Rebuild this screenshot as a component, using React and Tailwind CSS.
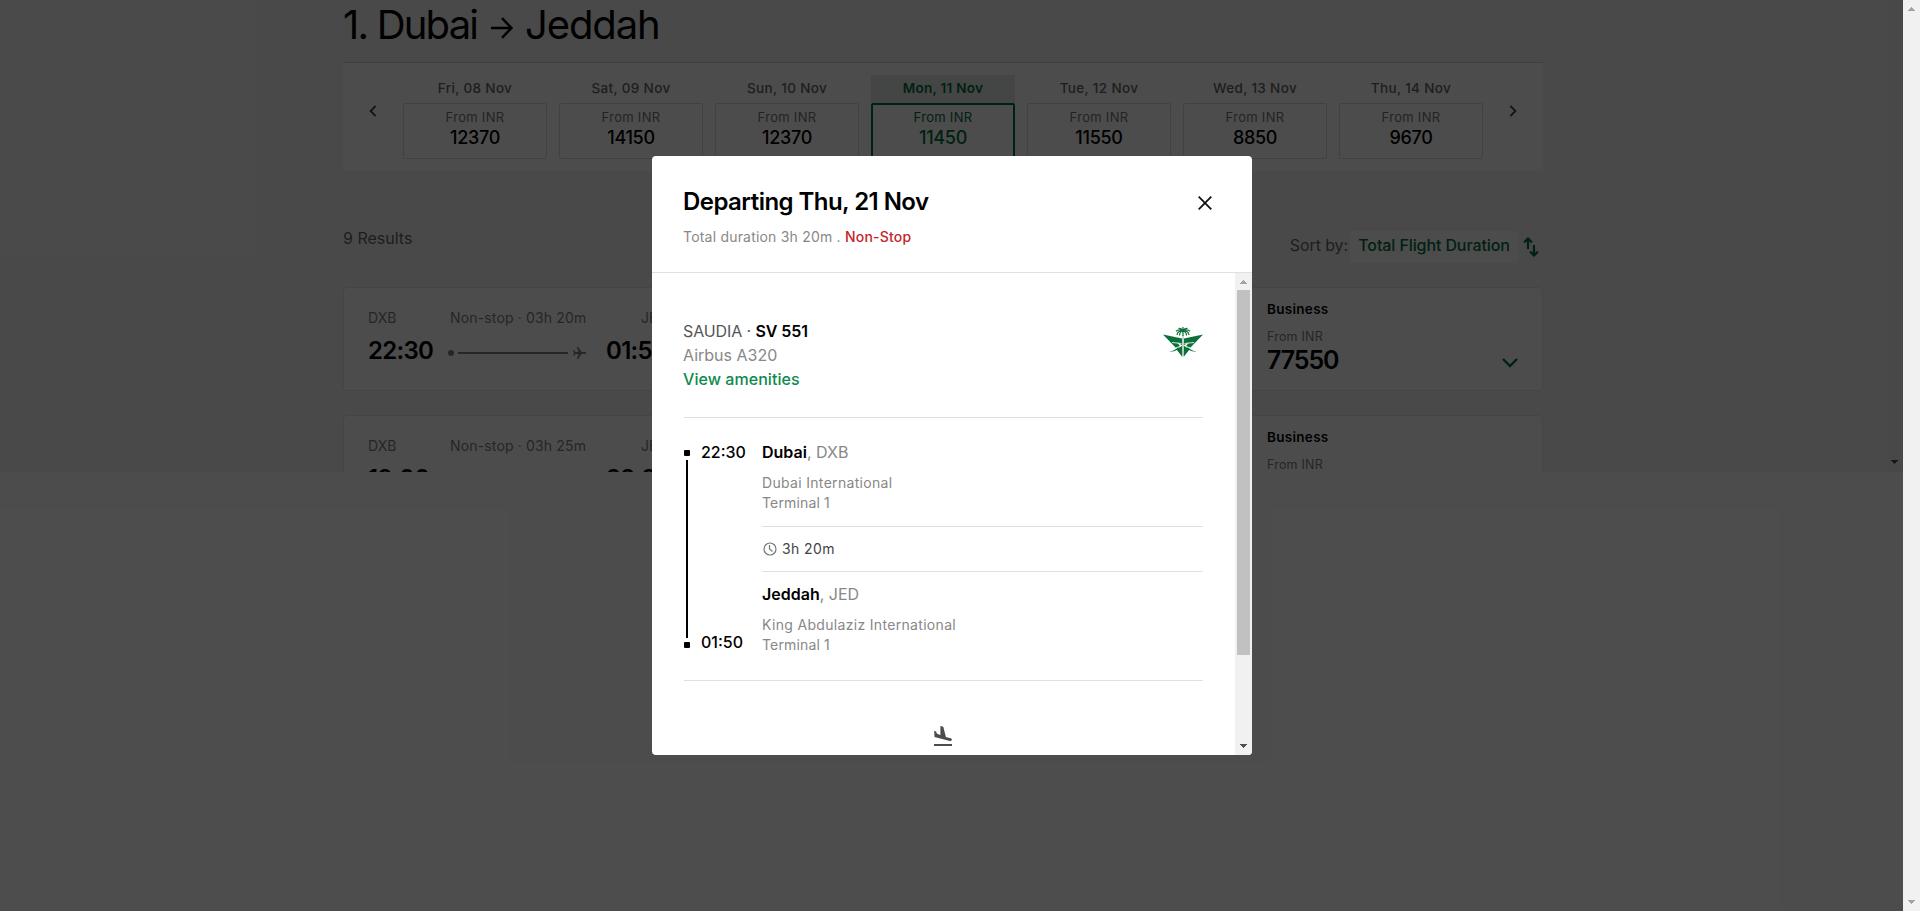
import React from "react";

const dates = [
  { day: "Fri, 08 Nov", price: "12370" },
  { day: "Sat, 09 Nov", price: "14150" },
  { day: "Sun, 10 Nov", price: "12370" },
  { day: "Mon, 11 Nov", price: "11450", active: true },
  { day: "Tue, 12 Nov", price: "11550" },
  { day: "Wed, 13 Nov", price: "8850" },
  { day: "Thu, 14 Nov", price: "9670" },
];

const flights = [
  { depart: "22:30", arrive: "01:50", duration: "Non-stop · 03h 20m", price: "77550" },
  { depart: "19:00", arrive: "22:25", duration: "Non-stop · 03h 25m", price: "77550" },
];

function ArrowUp({ className }) {
  return (
    <svg viewBox="0 0 7 4" className={className} shapeRendering="crispEdges">
      <path d="M3 0h1v1h1v1h1v1h1v1H0V3h1V2h1V1h1z" fill="currentColor" />
    </svg>
  );
}

function DateStrip() {
  return (
    <div className="flex h-[109px] border-t border-[#d0d0d0] bg-white pt-3">
      <div className="flex w-[60px] justify-center pt-[30px]">
        <svg viewBox="0 0 8 12" className="mr-[1px] h-3 w-2" fill="none" stroke="#444" strokeWidth="1.8">
          <path d="M6.6 1 1.6 6l5 5" />
        </svg>
      </div>
      <div className="flex gap-3">
        {dates.map((d) => (
          <div key={d.day} className="w-[144px] text-center">
            <div
              className={
                d.active
                  ? "h-7 bg-[#e0ece8] text-[13.5px] leading-[27px] font-semibold tracking-[0.3px] text-[#00703a]"
                  : "h-7 text-[13.5px] leading-[27px] font-medium tracking-[0.35px] text-[#666]"
              }
            >
              {d.day}
            </div>
            <div
              className={
                d.active
                  ? "h-14 rounded-[2px] border-2 border-[#00703a] pt-[3px] text-[#00703a]"
                  : "h-14 rounded-[2px] border border-[#dadada] pt-1 text-black"
              }
            >
              <div className={d.active ? "text-[13px] leading-[18px] tracking-[0.3px]" : "text-[13px] leading-[18px] tracking-[0.3px] text-[#777]"}>
                From INR
              </div>
              <div className="mt-[1px] text-[18px] leading-[22px] font-medium tracking-[-0.3px]">{d.price}</div>
            </div>
          </div>
        ))}
      </div>
      <div className="flex w-[60px] justify-center pt-[30px]">
        <svg viewBox="0 0 8 12" className="mr-[1px] h-3 w-2" fill="none" stroke="#444" strokeWidth="1.8">
          <path d="m1.4 1 5 5-5 5" />
        </svg>
      </div>
    </div>
  );
}

function FlightCard({ flight }) {
  return (
    <div className="mb-6 flex h-[104px] shrink-0 rounded-[4px] border border-[#e4e4e4] bg-white">
      <div className="flex flex-1 pt-5 pl-6">
        <div className="w-20">
          <div className="text-[14px] leading-5 text-[#808080]">DXB</div>
          <div className="mt-[11px] text-[24px] leading-6 font-semibold tracking-[-0.7px] text-black">{flight.depart}</div>
        </div>
        <div className="w-[157px]">
          <div className="pl-[2px] text-[14px] leading-5 tracking-[0.15px] whitespace-nowrap text-[#808080]">{flight.duration}</div>
          <div className="mt-[19px] flex items-center">
            <div className="h-[6px] w-[6px] rounded-full bg-[#808080]" />
            <div className="ml-1 h-[2px] w-[110px] bg-[#808080]" />
            <svg viewBox="0 0 13 12" className="ml-[5px] h-3 w-[13px]" fill="#808080">
              <path d="M12.2 5 8.5 5 5.2 0H3.8l1.6 5H2.6L1.2 3.2H.1L1 6 .1 8.8h1.1L2.6 7h2.8l-1.6 5h1.4l3.3-5h3.7c1.1 0 1.1-2 0-2Z" />
            </svg>
          </div>
        </div>
        <div>
          <div className="pl-9 text-[14px] leading-5 text-[#808080]">JED</div>
          <div className="mt-[11px] pl-[1px] text-[24px] leading-6 font-semibold tracking-[-0.7px] text-black">{flight.arrive}</div>
        </div>
      </div>
      <div className="flex w-[275px] justify-between pt-[11px]">
        <div>
          <div className="text-[13.5px] leading-5 font-semibold tracking-[0.3px] text-black">Business</div>
          <div className="mt-[9px] text-[12.5px] leading-[18px] tracking-[0.2px] text-[#808080]">From INR</div>
          <div className="mt-[1px] text-[25px] leading-[26px] font-semibold tracking-[-1.1px] text-black">{flight.price}</div>
        </div>
        <svg viewBox="0 0 16 10" className="mt-[59px] mr-6 h-[10px] w-4" fill="none" stroke="#00703a" strokeWidth="2.4">
          <path d="m1 1 7 7 7-7" />
        </svg>
      </div>
    </div>
  );
}

function ResultsPage() {
  return (
    <div className="flex h-[472px] w-[1903px] overflow-hidden bg-[#f6f6f6]">
      <div className="w-[1886px] pl-[343px]">
        <div className="w-[1200px]">
          <div className="flex h-[62px] text-[40px] leading-[50px] text-black">
            <span className="w-[148px] tracking-[-1.8px] whitespace-nowrap">1. Dubai</span>
            <svg viewBox="0 0 22 22" className="mt-[17px] h-[22px] w-[22px]" fill="none" stroke="#000" strokeWidth="2.4">
              <path d="M0 11h20M11 1.200 20.500 11 11 20.800" />
            </svg>
            <span className="ml-3 tracking-[-1.1px]">Jeddah</span>
          </div>
          <DateStrip />
          <div className="flex h-[116px] justify-between pt-[57px] text-[16px] leading-5 text-[#666]">
            <span>9 Results</span>
            <div className="mt-[3px] flex h-8 items-start">
              <span className="pt-[4px] tracking-[-0.1px]">Sort by:</span>
              <span className="ml-[2px] h-8 w-[168px] rounded-[2px] bg-white pt-[4px] text-center font-medium tracking-[-0.1px] text-[#00703a]">
                Total Flight Duration
              </span>
              <svg viewBox="0 0 16 20" className="mt-[6px] mr-1 ml-[5px] h-5 w-4" fill="none" stroke="#00703a" strokeWidth="2.2">
                <path d="M5 12V1.500M1 5.500l4-4 4 4M11 8v10.500M7 14.500l4 4 4-4" />
              </svg>
            </div>
          </div>
          {flights.map((f) => (
            <FlightCard key={f.depart} flight={f} />
          ))}
        </div>
      </div>
      <div className="flex flex-1 items-end justify-center bg-[#f1f1f1] pb-2">
        <ArrowUp className="h-1 w-[7px] rotate-180 text-[#505050]" />
      </div>
    </div>
  );
}

function AirlineLogo() {
  return (
    <svg viewBox="0 0 40 30" className="h-[30px] w-10" fill="#0b7138">
      <path d="M0 7.500 19 11.500V18L14 15.500 17 19 12.500 20.500Z" />
      <path d="M40 7.500 21 11.500V18l5-2.500L23 19l4.500 1.500Z" />
      <path d="M13.500 22.500 19 18.800V29.500ZM26.500 22.500 21 18.800V29.500Z" />
      <path d="M6 24.200c3 .3 6-1 9-4l1.500.8c-3 3-6 4-10.500 3.200ZM34 24.200c-3 .3-6-1-9-4l-1.500.8c3 3 6 4 10.500 3.200Z" />
      <path d="M19.500 8h1l.3 21.500h-1.600Z" fill="#8cbca0" />
      <path d="M9 15.500 18.500 16.500M31 15.500 21.500 16.500" stroke="#fff" strokeWidth=".8" />
      <g fill="none" stroke="#0b7138" strokeWidth="1.200">
        <path d="M20 4c-3-2-5-1.500-7 .2M20 4c3-2 5-1.500 7 .2M20 4c-3-.5-5.500.5-6 4M20 4c3-.5 5.500.5 6 4M20 4c-2 .5-3.500 2-3.500 4.500M20 4c2 .5 3.500 2 3.500 4.500M20 4c-1-2-3-3-4.500-2.500M20 4c1-2 3-3 4.500-2.500M20 0v9" />
      </g>
    </svg>
  );
}

function Stop({ city, code, airport }) {
  return (
    <div>
      <div className="text-[16px] leading-5 text-[#888]">
        <span className="font-semibold text-black">{city}</span>, {code}
      </div>
      <div className="mt-[11px] text-[14px] leading-5 text-[#888]">
        <div className="tracking-[0.32px]">{airport}</div>
        <div className="tracking-[0.15px]">Terminal 1</div>
      </div>
    </div>
  );
}

function Modal() {
  return (
    <div className="flex h-[599px] w-[600px] flex-col overflow-hidden rounded-[4px] bg-white">
      <div className="flex h-[117px] justify-between border-b border-[#e0e0e0] pt-[31px] pr-10 pl-[31px]">
        <div>
          <div className="text-[24px] leading-[30px] font-semibold tracking-[-0.55px] text-black">Departing Thu, 21 Nov</div>
          <div className="mt-[10px] text-[14px] leading-5 tracking-[0.2px] text-[#888]">
            Total duration 3h 20m . <span className="font-medium text-[#c3262b]">Non-Stop</span>
          </div>
        </div>
        <svg viewBox="0 0 14 14" className="mt-[9px] h-[14px] w-[14px]" fill="none" stroke="#111" strokeWidth="1.800">
          <path d="m.7.7 12.600 12.600M13.300.7.7 13.300" />
        </svg>
      </div>
      <div className="flex min-h-0 flex-1">
        <div className="w-[583px] pr-8 pl-8">
          <div className="flex h-[145px] justify-between border-b border-[#e0e0e0] pt-[46px]">
            <div className="-ml-px text-[16px] leading-6 text-[#888]">
              <div className="tracking-[-0.1px] text-[#555]">
                SAUDIA · <span className="font-semibold text-black">SV 551</span>
              </div>
              <div>Airbus A320</div>
              <div className="font-medium tracking-[0.05px] text-[#0d8a4c]">View amenities</div>
            </div>
            <div className="pt-2">
              <AirlineLogo />
            </div>
          </div>
          <div className="flex h-[263px] border-b border-[#e0e0e0] pt-6">
            <div className="flex w-[18px] flex-col pt-2">
              <div className="h-[6px] w-[6px] rounded-[1px] bg-black" />
              <div className="mt-1 ml-[2px] h-[178px] w-[2px] bg-black" />
              <div className="mt-1 h-[6px] w-[6px] rounded-[1px] bg-black" />
            </div>
            <div className="w-[60px] text-[16px] leading-5 font-medium text-black">
              <div className="-ml-px">22:30</div>
              <div className="mt-[170px] -ml-px">01:50</div>
            </div>
            <div className="flex-1">
              <Stop city="Dubai" code="DXB" airport="Dubai International" />
              <div className="mt-[13px] mb-3 flex h-[46px] items-center border-y border-[#e0e0e0] pb-[2px] text-[14px] tracking-[0.4px] text-[#444]">
                <svg viewBox="0 0 14 14" className="mt-[1px] mr-[5px] ml-[1px] h-[14px] w-[14px]" fill="none" stroke="#777" strokeWidth="1.200">
                  <circle cx="7" cy="7" r="6" />
                  <path d="M6.500 3v4l3 2.500" />
                </svg>
                3h 20m
              </div>
              <Stop city="Jeddah" code="JED" airport="King Abdulaziz International" />
            </div>
          </div>
          <div className="flex justify-center pt-[45px] pr-[2px]">
            <svg viewBox="0 0 18 20" className="h-5 w-[18px]" fill="#4c4c4c">
              <path d="M0 18h18v2H0ZM.5 11l15.400 4.100c.8.200 1.600-.2 1.900-1 .200-.8-.3-1.600-1.100-1.800l-4.800-1.300L9.300.7 6.400 0v8.900L3 7.700 2.100 5.400.2 4.800Z" />
            </svg>
          </div>
        </div>
        <div className="flex w-[17px] flex-col items-center bg-[#f1f1f1]">
          <ArrowUp className="mt-[7px] h-1 w-[7px] text-[#a3a3a3]" />
          <div className="mt-[6px] h-[365px] w-[13px] bg-[#c1c1c1]" />
          <ArrowUp className="mt-auto mb-[7px] h-1 w-[7px] rotate-180 text-[#505050]" />
        </div>
      </div>
    </div>
  );
}

export default function App() {
  return (
    <div className="relative flex h-[911px] w-[1920px] overflow-hidden bg-white font-['Inter',sans-serif]">
      <div className="w-[1903px]">
        <ResultsPage />
      </div>
      <div className="flex w-[17px] flex-col items-center justify-between bg-[#f1f1f1] py-[7px]">
        <ArrowUp className="h-1 w-[7px] text-[#a3a3a3]" />
        <ArrowUp className="h-1 w-[7px] rotate-180 text-[#a3a3a3]" />
      </div>
      <div className="absolute inset-y-0 left-0 w-[1903px] bg-black/70 pt-[156px] pl-[652px]">
        <Modal />
      </div>
    </div>
  );
}
